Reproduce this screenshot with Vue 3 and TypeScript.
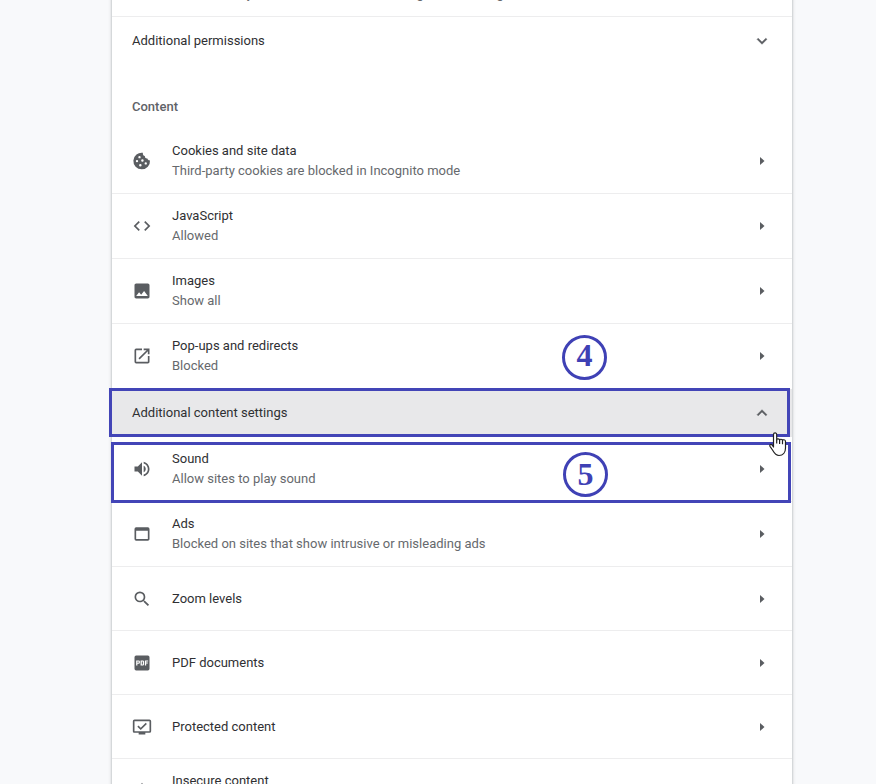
<script setup lang="ts">
import { ref } from 'vue'

interface Setting {
  icon: string
  title: string
  detail?: string
  badge?: string
}

const icons: Record<string, string> = {
  sync: 'M12 4V1L8 5l4 4V6c3.3 0 6 2.7 6 6 0 1-.3 2-.7 2.800l1.500 1.500A8 8 0 0 0 12 4zm0 14a6 6 0 0 1-5.300-8.800L5.200 7.700A8 8 0 0 0 12 20v3l4-4-4-4z',
  cookie:
    'M21.600 11.200c-1.500.300-2.900-.600-3.100-2.100-2 .3-3.400-1.200-3-3-1.800-.3-2.900-1.900-2.400-4A10 10 0 1 0 21.600 11.200zM9 6a1.400 1.400 0 1 1 0 2.800 1.400 1.400 0 0 1 0-2.800zM6 10.700a1.400 1.400 0 1 1 0 2.800 1.400 1.400 0 0 1 0-2.800zM12.500 10a1.500 1.500 0 1 1 0 3 1.500 1.500 0 0 1 0-3zM10 15.500a1.500 1.500 0 1 1 0 3 1.500 1.500 0 0 1 0-3zM16.500 13.500a1.400 1.400 0 1 1 0 2.800 1.400 1.400 0 0 1 0-2.800z',
  code: 'M9.400 16.600 4.800 12l4.600-4.600L8 6l-6 6 6 6 1.400-1.400zm5.200 0 4.600-4.600-4.600-4.600L16 6l6 6-6 6-1.400-1.400z',
  image:
    'M21 19V5c0-1.100-.9-2-2-2H5c-1.100 0-2 .9-2 2v14c0 1.100.9 2 2 2h14c1.100 0 2-.9 2-2zM8.500 13.500l2.500 3.010L14.500 12l4.500 6H5l3.500-4.500z',
  popup:
    'M19 19H5V5h7V3H5a2 2 0 0 0-2 2v14a2 2 0 0 0 2 2h14c1.100 0 2-.9 2-2v-7h-2v7zM14 3v2h3.590l-9.830 9.830 1.410 1.410L19 6.410V10h2V3h-7z',
  sound:
    'M3 9v6h4l5 5V4L7 9H3zm13.500 3c0-1.770-1.020-3.290-2.500-4.030v8.050c1.480-.73 2.500-2.250 2.500-4.020zM14 3.230v2.060c2.890.86 5 3.540 5 6.710s-2.110 5.850-5 6.710v2.060c4.010-.91 7-4.490 7-8.770s-2.990-7.860-7-8.770z',
  ads: 'M19 4H5a2 2 0 0 0-2 2v12a2 2 0 0 0 2 2h14c1.100 0 2-.9 2-2V6a2 2 0 0 0-2-2zm0 14H5V8h14v10z',
  zoom: 'M15.500 14h-.79l-.28-.27A6.471 6.471 0 0 0 16 9.500 6.500 6.500 0 1 0 9.500 16c1.610 0 3.090-.59 4.230-1.570l.27.28v.79l5 4.990L20.490 19l-4.990-5zm-6 0C7.010 14 5 11.990 5 9.500S7.010 5 9.500 5 14 7.010 14 9.500 11.990 14 9.500 14z',
  pdf: 'M5 3h14a2 2 0 0 1 2 2v14a2 2 0 0 1-2 2H5a2 2 0 0 1-2-2V5a2 2 0 0 1 2-2zM5 9v6h1.500v-2H8a1.500 1.500 0 0 0 1.500-1.500v-1A1.500 1.500 0 0 0 8 9zm1.500 1.300H8v1.400H6.500zM10.300 9v6H13a1.500 1.500 0 0 0 1.500-1.500v-3A1.500 1.500 0 0 0 13 9zm1.500 1.300H13v3.400h-1.200zM15.500 9v6H17v-2.300h2v-1.300h-2v-1.100h2.400V9z',
  protected:
    'M21 3H3a2 2 0 0 0-2 2v12c0 1.100.9 2 2 2h5v2h8v-2h5a2 2 0 0 0 2-2V5a2 2 0 0 0-2-2zm0 14H3V5h18v12zM17.900 8.300l-1.400-1.400-6 6-2.700-2.700-1.400 1.400 4.100 4.100z',
  warning: 'M1 21h22L12 2 1 21zm12-3h-2v-2h2v2zm0-4h-2v-4h2v4z',
}

const permissions: Setting[] = [
  {
    icon: 'sync',
    title: 'Background sync',
    detail: 'Allow recently closed sites to finish sending and receiving data',
  },
]

const content: Setting[] = [
  { icon: 'cookie', title: 'Cookies and site data', detail: 'Third-party cookies are blocked in Incognito mode' },
  { icon: 'code', title: 'JavaScript', detail: 'Allowed' },
  { icon: 'image', title: 'Images', detail: 'Show all' },
  { icon: 'popup', title: 'Pop-ups and redirects', detail: 'Blocked', badge: '4' },
]

const additional: Setting[] = [
  { icon: 'sound', title: 'Sound', detail: 'Allow sites to play sound', badge: '5' },
  { icon: 'ads', title: 'Ads', detail: 'Blocked on sites that show intrusive or misleading ads' },
  { icon: 'zoom', title: 'Zoom levels' },
  { icon: 'pdf', title: 'PDF documents' },
  { icon: 'protected', title: 'Protected content' },
  { icon: 'warning', title: 'Insecure content', detail: 'Insecure content is blocked by default on secure sites' },
]

const groups = [
  { name: 'permissions', items: permissions },
  { name: 'content', items: content },
  { name: 'additional', items: additional },
]

const contentOpen = ref(true)
</script>

<template>
  <div class="page">
    <main class="card">
      <template v-for="group in groups" :key="group.name">
        <h2 v-if="group.name === 'content'" class="heading">Content</h2>

        <div v-if="group.name === 'additional'" class="expander-wrap">
          <button class="expander active" type="button" :aria-expanded="contentOpen" @click="contentOpen = !contentOpen">
            <span>Additional content settings</span>
            <svg class="icon chevron" viewBox="0 0 24 24" aria-hidden="true">
              <path :d="contentOpen ? 'm12 8-6 6 1.410 1.410L12 10.830l4.590 4.580L18 14z' : 'M16.590 8.590 12 13.170 7.410 8.590 6 10l6 6 6-6z'" />
            </svg>
          </button>
          <svg class="pointer" viewBox="0 0 18 25" aria-hidden="true">
            <path
              d="M4.500 15V2.500a1.500 1.500 0 0 1 3.200 0V8c0-1.600 2.900-1.600 2.900.2 0-1.400 2.900-1.300 2.900.4 0-1.300 3-1.200 3 .8V16c0 4.500-2.500 7.500-6.500 7.500-3.500 0-4.800-2.500-6.500-5.500L1 14.300c-.7-1.500 1-2.600 2-1.400z"
            />
            <path d="M7.700 7.500v4M10.600 8v4M13.500 8.600v3.600" />
          </svg>
        </div>

        <ul v-if="group.name !== 'additional' || contentOpen" class="list">
          <li v-for="item in group.items" :key="item.title" class="item" :class="{ outlined: item.icon === 'sound' }">
            <button class="row" :class="{ single: !item.detail }" type="button">
              <svg class="icon" viewBox="0 0 24 24" aria-hidden="true">
                <path fill-rule="evenodd" :d="icons[item.icon]" />
              </svg>
              <span class="text">
                <span>{{ item.title }}</span>
                <span v-if="item.detail" class="detail">{{ item.detail }}</span>
              </span>
              <svg class="icon" viewBox="0 0 20 20" aria-hidden="true"><path d="M8 6v8l4.500-4z" /></svg>
            </button>
            <span v-if="item.badge" class="badge">{{ item.badge }}</span>
          </li>
        </ul>

        <button v-if="group.name === 'permissions'" class="expander divided" type="button" aria-expanded="false">
          <span>Additional permissions</span>
          <svg class="icon chevron" viewBox="0 0 24 24" aria-hidden="true">
            <path d="M16.590 8.590 12 13.170 7.410 8.590 6 10l6 6 6-6z" />
          </svg>
        </button>
      </template>
    </main>
  </div>
</template>

<style>
body {
  margin: 0;
  background: #f8f9fb;
}
</style>

<style scoped>
.page {
  display: grid;
  grid-template-columns: minmax(0, 112fr) minmax(0, 680px) minmax(0, 84fr);
  height: 100vh;
  overflow: hidden;
  font: 13px/20px Roboto, 'Liberation Sans', sans-serif;
  color: #2f3033;
}

.card {
  grid-column: 2;
  align-self: start;
  margin-top: -48px;
  background: #fff;
  box-shadow:
    0 1px 2px rgba(60, 64, 67, 0.3),
    0 1px 3px 1px rgba(60, 64, 67, 0.15);
}

button {
  box-sizing: border-box;
  display: flex;
  align-items: center;
  width: 100%;
  margin: 0;
  padding: 0 20px;
  border: 0;
  background: transparent;
  color: inherit;
  font: inherit;
  text-align: left;
  cursor: pointer;
}

.heading {
  margin: 0;
  padding: 32px 20px 12px;
  font-size: 13px;
  font-weight: 500;
  color: #5f6368;
}

.list {
  margin: 0;
  padding: 0;
  list-style: none;
}

.item {
  position: relative;
}

.item + .item,
.divided {
  border-top: 1px solid #ededee;
}

.row {
  height: 64px;
  gap: 20px;
}

.row.single {
  height: 63px;
}

.text {
  display: flex;
  flex: 1;
  flex-direction: column;
  min-width: 0;
}

.detail {
  color: #66696d;
}

.icon {
  flex: none;
  width: 20px;
  height: 20px;
  fill: #5a5d61;
}

.chevron {
  stroke: #5a5d61;
  stroke-width: 0.5;
}

.expander {
  height: 48px;
  justify-content: space-between;
}

.expander.divided {
  height: 49px;
}

.expander-wrap {
  position: relative;
  padding-top: 1px;
}

.expander.active {
  background: #e8e8ea;
}

.expander-wrap::after,
.outlined::after {
  content: '';
  position: absolute;
  z-index: 1;
  border: 3px solid #4345b7;
  pointer-events: none;
}

.expander-wrap {
  z-index: 2;
}

.expander-wrap::after {
  inset: 0 2px 0 -3px;
}

.outlined::after {
  inset: 5px 1px -2px -1px;
}

.badge {
  position: absolute;
  top: 11px;
  right: 185px;
  box-sizing: border-box;
  width: 45px;
  height: 45px;
  border: 3px solid #3f41b5;
  border-radius: 50%;
  font: bold 32px/35px 'Liberation Serif', serif;
  text-align: center;
  color: #3f41b5;
  pointer-events: none;
}

.outlined {
  z-index: 1;
}

.outlined .badge {
  top: 15px;
  right: 184px;
  line-height: 39px;
}

.pointer {
  position: absolute;
  z-index: 2;
  top: 44px;
  right: 5px;
  width: 18px;
  height: 25px;
  fill: #fff;
  stroke: #222;
  stroke-width: 1.2;
  stroke-linejoin: round;
  pointer-events: none;
}
</style>
